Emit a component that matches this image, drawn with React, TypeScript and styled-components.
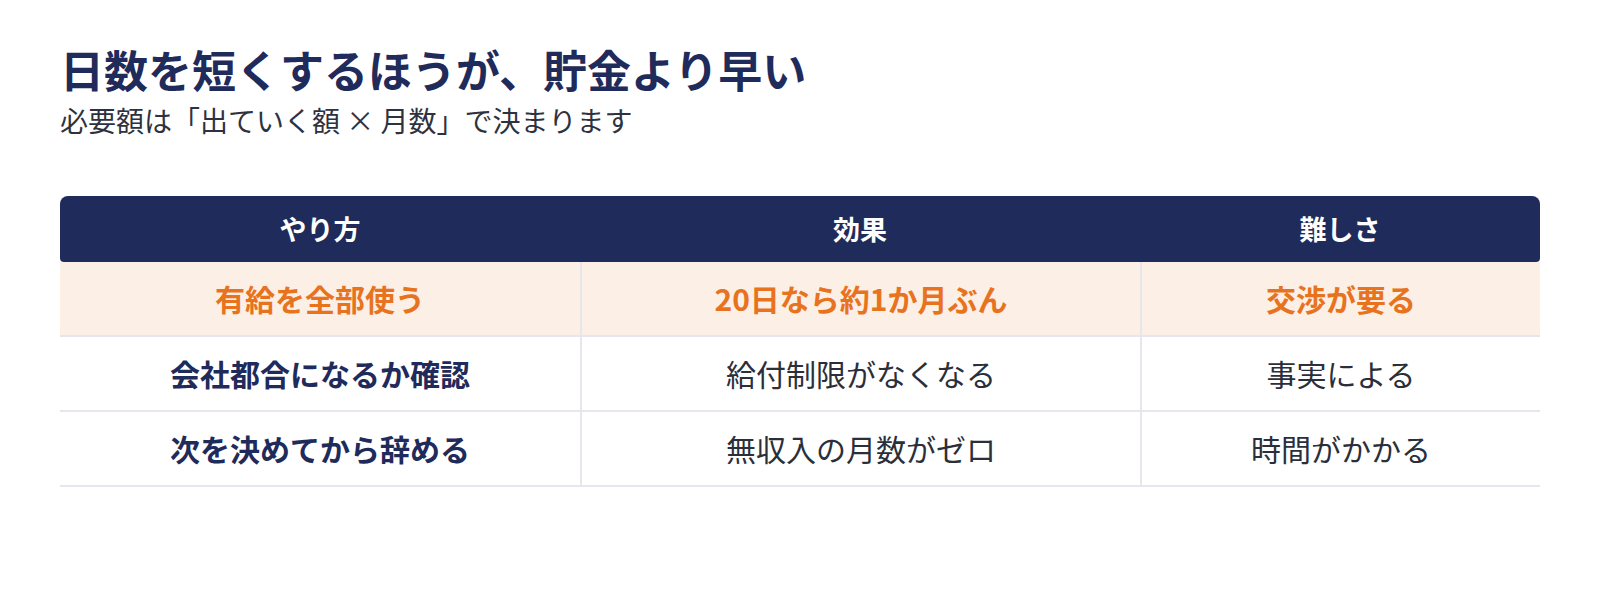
import React from 'react'
import styled, { createGlobalStyle } from 'styled-components'

const GlobalStyle = createGlobalStyle`
  body {
    margin: 0;
    background: #ffffff;
    font-family: "Noto Sans CJK JP", "Noto Sans", sans-serif;
  }
`

const navy = '#1f2b5a'
const orange = '#e8731f'
const line = '#e6e7ee'

const Page = styled.div`
  padding: 43px 60px 60px;
`

const Title = styled.h1`
  margin: 0;
  font-size: 44px;
  line-height: 52px;
  font-weight: 700;
  color: ${navy};
`

const Subtitle = styled.p`
  margin: 6px 0 0;
  font-size: 28px;
  line-height: 38px;
  color: #2e3240;
`

const Table = styled.table`
  margin-top: 57px;
  width: 1480px;
  border-collapse: separate;
  border-spacing: 0;
  table-layout: fixed;
`

const TH = styled.th`
  background: ${navy};
  color: #ffffff;
  font-size: 27px;
  font-weight: 700;
  line-height: 36px;
  padding: 15px 16px;
  text-align: center;

  &:first-child {
    border-radius: 8px 0 0 4px;
  }

  &:last-child {
    border-radius: 0 8px 4px 0;
  }
`

const TR = styled.tr<{ $highlight?: boolean }>`
  background: ${p => (p.$highlight ? '#fcefe5' : '#ffffff')};
`

const TD = styled.td<{ $highlight?: boolean; $strong?: boolean }>`
  padding: 14px 16px;
  line-height: 45px;
  font-size: 30px;
  text-align: center;
  border-bottom: 2px solid ${line};
  font-weight: ${p => (p.$highlight || p.$strong ? 700 : 400)};
  color: ${p => (p.$highlight ? orange : p.$strong ? navy : '#2b2f3a')};

  & + & {
    border-left: 2px solid ${line};
  }
`

type Row = {
  how: string
  effect: string
  difficulty: string
  highlight?: boolean
}

const rows: Row[] = [
  { how: '有給を全部使う', effect: '20日なら約1か月ぶん', difficulty: '交渉が要る', highlight: true },
  { how: '会社都合になるか確認', effect: '給付制限がなくなる', difficulty: '事実による' },
  { how: '次を決めてから辞める', effect: '無収入の月数がゼロ', difficulty: '時間がかかる' },
]

const App = () => {
  return (
    <Page>
      <GlobalStyle />
      <Title>日数を短くするほうが、貯金より早い</Title>
      <Subtitle>必要額は「出ていく額 × 月数」で決まります</Subtitle>
      <Table>
        <colgroup>
          <col style={{ width: 520 }} />
          <col style={{ width: 560 }} />
          <col style={{ width: 400 }} />
        </colgroup>
        <thead>
          <tr>
            <TH>やり方</TH>
            <TH>効果</TH>
            <TH>難しさ</TH>
          </tr>
        </thead>
        <tbody>
          {rows.map(row => (
            <TR key={row.how} $highlight={row.highlight}>
              <TD $highlight={row.highlight} $strong>{row.how}</TD>
              <TD $highlight={row.highlight}>{row.effect}</TD>
              <TD $highlight={row.highlight}>{row.difficulty}</TD>
            </TR>
          ))}
        </tbody>
      </Table>
    </Page>
  )
}

export default App
